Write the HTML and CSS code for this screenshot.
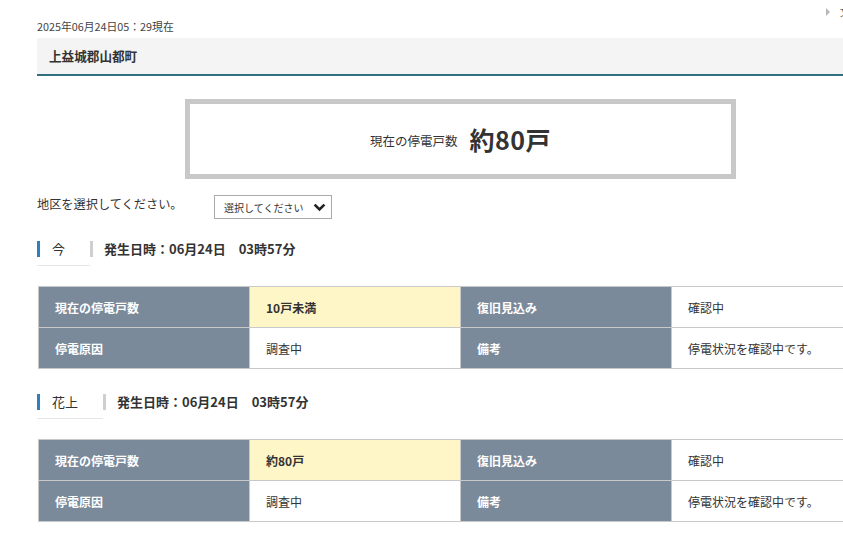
FILE: index.html
```html
<!DOCTYPE html>
<html lang="ja">
<head>
<meta charset="utf-8">
<title>停電情報</title>
<link rel="stylesheet" href="styles.css">
</head>
<body>
<div class="util"><span class="tri"></span><span class="util-text">文</span></div>
<div class="page">
  <div class="stamp">2025年06月24日05：29現在</div>
  <div class="title">上益城郡山都町</div>
  <div class="summary">
    <span class="sum-label">現在の停電戸数</span>
    <span class="sum-value">約80戸</span>
  </div>
  <div class="select-row">
    <span class="select-label">地区を選択してください。</span>
    <div class="select">
      <span>選択してください</span>
      <svg class="chev" width="13" height="9" viewBox="0 0 13 9"><path d="M1.6 1.6 L6.5 6.5 L11.4 1.6" fill="none" stroke="#222" stroke-width="2.6"/></svg>
    </div>
  </div>

  <div class="sec-head first">
    <div class="sec-name"><span>今</span></div>
    <div class="sec-date">発生日時：06月24日　03時57分</div>
  </div>
  <table class="info">
    <tr>
      <th>現在の停電戸数</th><td class="hl">10戸未満</td>
      <th>復旧見込み</th><td>確認中</td>
    </tr>
    <tr>
      <th>停電原因</th><td>調査中</td>
      <th>備考</th><td>停電状況を確認中です。</td>
    </tr>
  </table>

  <div class="sec-head">
    <div class="sec-name"><span>花上</span></div>
    <div class="sec-date">発生日時：06月24日　03時57分</div>
  </div>
  <table class="info">
    <tr>
      <th>現在の停電戸数</th><td class="hl">約80戸</td>
      <th>復旧見込み</th><td>確認中</td>
    </tr>
    <tr>
      <th>停電原因</th><td>調査中</td>
      <th>備考</th><td>停電状況を確認中です。</td>
    </tr>
  </table>
</div>
</body>
</html>
```

FILE: styles.css
```css
html, body {
  margin: 0;
  padding: 0;
  background: #fff;
  overflow: hidden;
}
body {
  font-family: "Noto Sans CJK JP", "Noto Sans", sans-serif;
  color: #333;
  position: relative;
  width: 843px;
  height: 549px;
}
.util {
  position: absolute;
  top: 4px;
  left: 826px;
  display: flex;
  align-items: center;
  white-space: nowrap;
  font-size: 10px;
  color: #555;
}
.tri {
  width: 0;
  height: 0;
  border-left: 4px solid #b8b8b8;
  border-top: 4px solid transparent;
  border-bottom: 4px solid transparent;
  margin-right: 10px;
}
.page {
  width: 847px;
  margin-left: 37px;
  padding-top: 18px;
}
.stamp {
  font-size: 10.8px;
  line-height: 16px;
  height: 16px;
  color: #444;
  margin-bottom: 4px;
}
.title {
  background: #f4f4f4;
  height: 36px;
  line-height: 36px;
  border-bottom: 2px solid #2f6f7e;
  padding-left: 12px;
  font-size: 12.6px;
  font-weight: bold;
  color: #333;
}
.summary {
  width: 541px;
  height: 70px;
  margin: 23px auto 0;
  border: 5px solid #c8c8c8;
  display: flex;
  align-items: center;
  justify-content: center;
  gap: 12px;
}
.sum-label {
  font-size: 12.5px;
  margin-top: 3px;
}
.sum-value {
  font-size: 25px;
  font-weight: bold;
  letter-spacing: 0.5px;
}
.select-row {
  margin-top: 16px;
  display: flex;
  align-items: flex-start;
  height: 24px;
}
.select-label {
  font-size: 12.2px;
  line-height: 18px;
  width: 177px;
}
.select {
  display: flex;
  align-items: center;
  justify-content: space-between;
  padding: 0 5px 0 9px;
  font-size: 10px;
  color: #333;
  border: 1px solid #aaa;
  box-sizing: border-box;
  width: 118px;
  height: 24px;
}
.chev {
  display: block;
}
.sec-head {
  display: flex;
  align-items: flex-start;
  margin-top: 25px;
}
.sec-head.first {
  margin-top: 22px;
}
.sec-name {
  padding-bottom: 8px;
  border-bottom: 1px solid #e6e6e6;
}
.sec-name span {
  display: block;
  border-left: 3px solid #2f7fbe;
  padding-left: 12px;
  padding-right: 25px;
  font-size: 13px;
  line-height: 16px;
}
.sec-date {
  border-left: 3px solid #cfcfcf;
  padding-left: 11px;
  font-size: 13px;
  line-height: 16px;
  font-weight: bold;
}
.info {
  margin-top: 20px;
  width: 845px;
  border-collapse: collapse;
  table-layout: fixed;
  margin-left: 1px;
}
.info th, .info td {
  height: 40px;
  border: 1px solid #c9c9c9;
  padding: 0 0 0 16px;
  font-size: 12px;
  text-align: left;
  vertical-align: middle;
}
.info th {
  background: #7a8a9b;
  color: #fff;
  font-weight: bold;
}
.info td {
  background: #fff;
  color: #333;
}
.info td.hl {
  background: #fff6c8;
  font-weight: bold;
}
```
